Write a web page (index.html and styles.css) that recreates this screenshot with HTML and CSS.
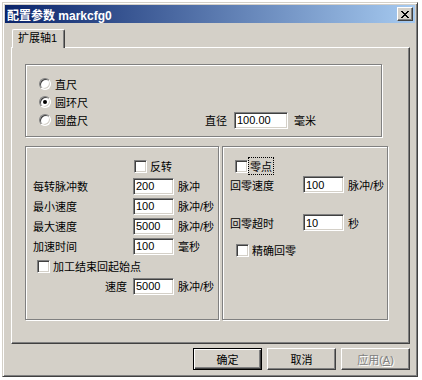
FILE: index.html
```html
<!DOCTYPE html>
<html lang="zh-CN">
<head>
    <meta charset="UTF-8">
    <meta name="viewport" content="width=device-width, initial-scale=1.0">
    <title>配置参数 markcfg0</title>
    <link rel="stylesheet" href="styles.css">
</head>
<body>
    <div class="window">
        <div class="titlebar">
            <span class="title">配置参数 markcfg0</span>
            <span class="close-btn">
                <svg width="8" height="7" viewBox="0 0 8 7">
                    <path d="M0 0h2v1H0z M6 0h2v1H6z M1 1h2v1H1z M5 1h2v1H5z M2 2h4v1H2z M3 3h2v1H3z M2 4h4v1H2z M1 5h2v1H1z M5 5h2v1H5z M0 6h2v1H0z M6 6h2v1H6z" fill="#000"/>
                </svg>
            </span>
        </div>

        <div class="tabs">
            <div class="tab active">扩展轴1</div>
        </div>

        <div class="tab-panel">
            <div class="group group-scale">
                <div class="radio-row"><span class="radio"></span>直尺</div>
                <div class="radio-row"><span class="radio checked"></span>圆环尺</div>
                <div class="radio-row">
                    <span class="radio-label"><span class="radio"></span>圆盘尺</span>
                    <span>直径</span>
                    <input class="input input-wide" type="text" value="100.00">
                    <span class="unit unit-wide">毫米</span>
                </div>
            </div>

            <div class="group-row">
                <div class="group group-motor">
                    <div class="check-row check-reverse"><span class="checkbox"></span>反转</div>
                    <div class="field-row">
                        <span class="field-label">每转脉冲数</span>
                        <input class="input" type="text" value="200">
                        <span class="unit">脉冲</span>
                    </div>
                    <div class="field-row">
                        <span class="field-label">最小速度</span>
                        <input class="input" type="text" value="100">
                        <span class="unit">脉冲/秒</span>
                    </div>
                    <div class="field-row">
                        <span class="field-label">最大速度</span>
                        <input class="input" type="text" value="5000">
                        <span class="unit">脉冲/秒</span>
                    </div>
                    <div class="field-row">
                        <span class="field-label">加速时间</span>
                        <input class="input" type="text" value="100">
                        <span class="unit">毫秒</span>
                    </div>
                    <div class="check-row check-return"><span class="checkbox"></span>加工结束回起始点</div>
                    <div class="field-row">
                        <span class="field-label align-right">速度</span>
                        <input class="input" type="text" value="5000">
                        <span class="unit">脉冲/秒</span>
                    </div>
                </div>

                <div class="group group-home">
                    <div class="check-row check-zero"><span class="checkbox"></span><span class="focused">零点</span></div>
                    <div class="field-row home-row">
                        <span class="field-label home-label">回零速度</span>
                        <input class="input" type="text" value="100">
                        <span class="unit">脉冲/秒</span>
                    </div>
                    <div class="field-row home-row home-timeout">
                        <span class="field-label home-label">回零超时</span>
                        <input class="input" type="text" value="10">
                        <span class="unit">秒</span>
                    </div>
                    <div class="check-row check-exact"><span class="checkbox"></span>精确回零</div>
                </div>
            </div>
        </div>

        <div class="buttons">
            <button class="btn btn-default">确定</button>
            <button class="btn">取消</button>
            <button class="btn" disabled>应用(<u>A</u>)</button>
        </div>
    </div>
</body>
</html>
```

FILE: styles.css
```css
body {
    margin: 0;
    background-color: #fff;
    font-family: "Liberation Sans", "Noto Sans CJK SC", sans-serif;
    font-size: 11px;
    color: #000;
}

.window {
    margin: 2px 0 0 2px;
    width: 416px;
    height: 375px;
    box-sizing: border-box;
    background: #d4d0c8;
    border: 1px solid;
    border-color: #d4d0c8 #404040 #404040 #d4d0c8;
    box-shadow: inset 1px 1px #fff, inset -1px -1px #808080;
    padding: 2px;
}

.titlebar {
    height: 18px;
    display: flex;
    align-items: center;
    justify-content: space-between;
    padding: 0 2px 0 2px;
    background: linear-gradient(90deg, #0a246a, #a6caf0);
}

.title {
    color: #fff;
    font-weight: bold;
    font-size: 12px;
}

.close-btn {
    width: 16px;
    height: 14px;
    box-sizing: border-box;
    display: flex;
    align-items: center;
    justify-content: center;
    background: #d4d0c8;
    border: 1px solid;
    border-color: #fff #404040 #404040 #fff;
    box-shadow: inset -1px -1px #808080;
    padding-right: 1px;
}

.tabs {
    display: flex;
    padding: 6px 0 0 7px;
}

.tab {
    width: 53px;
    height: 19px;
    box-sizing: border-box;
    margin-bottom: -1px;
    padding-left: 5px;
    line-height: 17px;
    background: #d4d0c8;
    border: 1px solid;
    border-color: #fff #404040 transparent #fff;
    border-bottom: none;
    border-radius: 2px 2px 0 0;
    box-shadow: inset -1px 0 #808080;
    position: relative;
    z-index: 1;
}

.tab-panel {
    margin-left: 6px;
    width: 399px;
    height: 297px;
    box-sizing: border-box;
    border: 1px solid;
    border-color: #fff #404040 #404040 #fff;
    box-shadow: inset -1px -1px #808080;
    padding: 16px 0 0 13px;
}

.group {
    box-sizing: border-box;
    border: 1px solid #808080;
    box-shadow: inset 1px 1px #fff, 1px 1px #fff;
}

.group-scale {
    width: 357px;
    height: 73px;
    padding: 10px 0 0 13px;
}

.radio-row {
    height: 18px;
    display: flex;
    align-items: center;
}

.radio-label {
    width: 166px;
    display: flex;
    align-items: center;
}

.radio {
    width: 12px;
    height: 12px;
    box-sizing: border-box;
    margin-right: 4px;
    border-radius: 50%;
    background: #fff;
    border: 1px solid;
    border-color: #808080 #fff #fff #808080;
    box-shadow: inset 1px 1px #404040, inset -1px -1px #d4d0c8;
    display: flex;
    align-items: center;
    justify-content: center;
}

.radio.checked::after {
    content: "";
    width: 4px;
    height: 4px;
    border-radius: 50%;
    background: #000;
}

.input {
    width: 41px;
    height: 17px;
    box-sizing: border-box;
    margin: 0;
    padding: 0 2px;
    border: 1px solid;
    border-color: #808080 #fff #fff #808080;
    box-shadow: inset 1px 1px #404040, inset -1px -1px #d4d0c8;
    background: #fff;
    font-family: "Liberation Sans", sans-serif;
    font-size: 11px;
    color: #000;
    outline: none;
}

.input-wide {
    width: 54px;
    margin-left: 7px;
}

.unit {
    margin-left: 4px;
}

.unit-wide {
    margin-left: 6px;
}

.group-row {
    display: flex;
    gap: 3px;
    margin-top: 9px;
}

.group-motor {
    width: 194px;
    height: 174px;
    padding: 9px 0 0 7px;
}

.group-home {
    width: 166px;
    height: 174px;
    padding: 10px 0 0 7px;
}

.check-row {
    height: 20px;
    display: flex;
    align-items: center;
}

.checkbox {
    width: 13px;
    height: 13px;
    box-sizing: border-box;
    margin-right: 3px;
    background: #fff;
    border: 1px solid;
    border-color: #808080 #fff #fff #808080;
    box-shadow: inset 1px 1px #404040, inset -1px -1px #d4d0c8;
}

.check-reverse {
    padding-left: 101px;
}

.check-return {
    padding-left: 4px;
}

.field-row {
    height: 20px;
    display: flex;
    align-items: center;
}

.field-label {
    width: 100px;
}

.align-right {
    text-align: right;
    box-sizing: border-box;
    padding-right: 6px;
}

.check-zero {
    height: 18px;
    padding-left: 5px;
}

.check-zero .checkbox {
    margin-right: 1px;
}

.focused {
    padding: 0 1px;
    outline: 1px dotted #000;
}

.home-row {
    height: 19px;
}

.home-label {
    width: 73px;
}

.home-timeout {
    margin-top: 19px;
}

.check-exact {
    height: 18px;
    margin-top: 9px;
    padding-left: 6px;
}

.buttons {
    margin: 4px 0 0 6px;
    width: 399px;
    display: flex;
    justify-content: flex-end;
    gap: 5px;
}

.btn {
    width: 69px;
    height: 22px;
    box-sizing: border-box;
    padding: 0;
    background: #d4d0c8;
    border: 1px solid;
    border-color: #fff #404040 #404040 #fff;
    box-shadow: inset -1px -1px #808080;
    font-family: "Liberation Sans", "Noto Sans CJK SC", sans-serif;
    font-size: 11px;
    color: #000;
}

.btn-default {
    border-color: #000;
    box-shadow: inset 1px 1px #fff, inset -1px -1px #404040, inset -2px -2px #808080;
}

.btn:disabled {
    color: #808080;
    text-shadow: 1px 1px #fff;
}
```
